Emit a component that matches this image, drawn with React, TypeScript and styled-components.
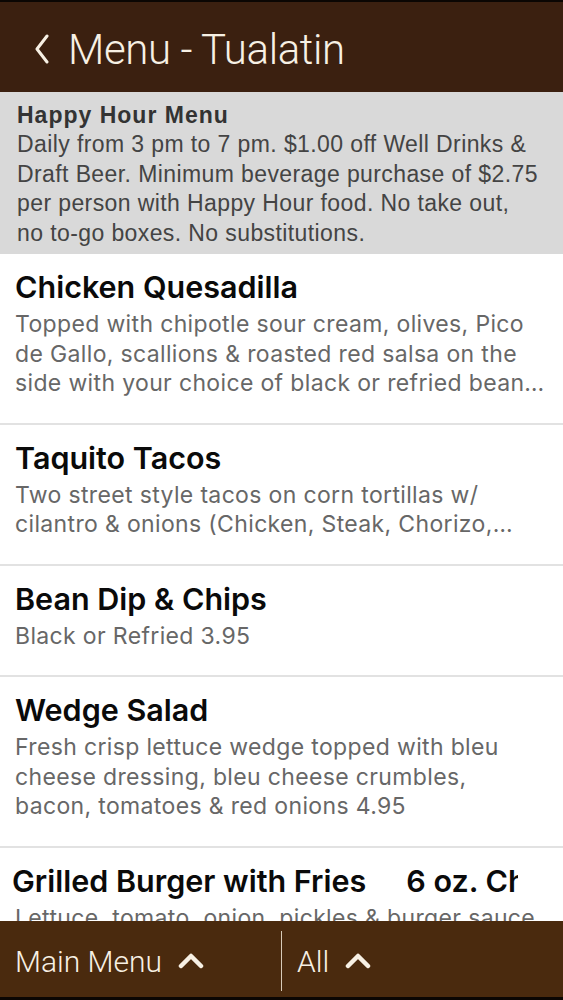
import React from 'react';
import styled, { createGlobalStyle } from 'styled-components';

const GlobalStyle = createGlobalStyle`
  html, body {
    margin: 0;
    padding: 0;
    background: #000;
  }
  #root {
    height: 1000px;
  }
`;

const Screen = styled.div`
  width: 563px;
  height: 1000px;
  display: flex;
  flex-direction: column;
  overflow: hidden;
  background: #fff;
  border-top: 2px solid #0b0603;
  border-bottom: 3px solid #0b0603;
  box-sizing: border-box;
`;

const Header = styled.header`
  flex: 0 0 90px;
  display: flex;
  align-items: center;
  gap: 18px;
  padding: 4px 0 0 34px;
  background: #3b2010;
  color: #f7f0e4;
  box-sizing: border-box;
`;

const BackButton = styled.button`
  display: flex;
  align-items: center;
  padding: 0;
  border: none;
  background: transparent;
  color: inherit;
  cursor: pointer;
`;

const HeaderTitle = styled.h1`
  margin: 0;
  font-family: Roboto, 'Liberation Sans', sans-serif;
  font-weight: 300;
  font-size: 42px;
  letter-spacing: -0.4px;
`;

const Notice = styled.section`
  padding: 9px 22px 6px 17px;
  background: #d9d9d9;
  color: #444;
  font-family: 'Liberation Sans', Arial, sans-serif;
  font-size: 23px;
  line-height: 29.4px;
  letter-spacing: 0.4px;
`;

const NoticeTitle = styled.div`
  font-weight: 700;
  color: #333;
  letter-spacing: 1px;
`;

const List = styled.main`
  flex: 1;
  overflow: hidden;
`;

const Item = styled.article`
  padding: 14px 15px 24px;
  border-bottom: 2px solid #e2e2e2;
  font-family: Inter, 'Noto Sans', sans-serif;
`;

const ItemTitle = styled.h2`
  margin: 0;
  font-size: 30.5px;
  line-height: 38px;
  font-weight: 600;
  color: #0a0a0a;
  white-space: nowrap;
`;

const Marquee = styled.div`
  overflow: hidden;
  margin: 0 30px 0 -3px;
`;

const MarqueeText = styled(ItemTitle)<{ $gap: number }>`
  display: flex;
  gap: ${({ $gap }) => $gap}px;
`;

const ItemDesc = styled.p<{ $lines: number }>`
  margin: 4px 0 0;
  font-size: 23px;
  line-height: 29.5px;
  letter-spacing: 0.35px;
  color: #676767;
  display: -webkit-box;
  -webkit-box-orient: vertical;
  -webkit-line-clamp: ${({ $lines }) => $lines};
  overflow: hidden;
`;

const Footer = styled.footer`
  flex: 0 0 76px;
  display: flex;
  align-items: center;
  background: #4a2a0e;
  color: #f7f0e4;
  font-family: Roboto, 'Liberation Sans', sans-serif;
  font-weight: 300;
  font-size: 30px;
`;

const FooterTab = styled.button<{ $width?: number }>`
  display: flex;
  align-items: center;
  gap: 16px;
  height: 100%;
  padding: 4px 0 0 15px;
  width: ${({ $width }) => ($width ? `${$width}px` : 'auto')};
  border: none;
  background: transparent;
  color: inherit;
  font: inherit;
  cursor: pointer;
  box-sizing: border-box;
`;

const Divider = styled.div`
  width: 1px;
  height: 60px;
  margin-top: 4px;
  background: #d8cbb8;
`;

const BackIcon = () => (
  <svg width="16" height="30" viewBox="0 0 16 30" fill="none">
    <polyline points="13,2 3,15 13,28" stroke="currentColor" strokeWidth="3" strokeLinecap="round" strokeLinejoin="round" />
  </svg>
);

const ChevronUp = () => (
  <svg width="26" height="16" viewBox="0 0 26 16" fill="none">
    <polyline points="3,13 13,3 23,13" stroke="currentColor" strokeWidth="4.5" strokeLinecap="round" strokeLinejoin="round" />
  </svg>
);

interface IMenuItem {
  name: string;
  description: string;
  lines: number;
}

const items: IMenuItem[] = [
  {
    name: 'Chicken Quesadilla',
    description:
      'Topped with chipotle sour cream, olives, Pico de Gallo, scallions & roasted red salsa on the side with your choice of black or refried beans 6.95',
    lines: 3,
  },
  {
    name: 'Taquito Tacos',
    description:
      'Two street style tacos on corn tortillas w/ cilantro & onions (Chicken, Steak, Chorizo, Carnitas) 3.95',
    lines: 2,
  },
  {
    name: 'Bean Dip & Chips',
    description: 'Black or Refried 3.95',
    lines: 1,
  },
  {
    name: 'Wedge Salad',
    description:
      'Fresh crisp lettuce wedge topped with bleu cheese dressing, bleu cheese crumbles, bacon, tomatoes & red onions 4.95',
    lines: 3,
  },
];

const App: React.FC = () => {
  return (
    <>
      <GlobalStyle />
      <Screen>
        <Header>
          <BackButton aria-label="Back">
            <BackIcon />
          </BackButton>
          <HeaderTitle>Menu - Tualatin</HeaderTitle>
        </Header>

        <List>
          <Notice>
            <NoticeTitle>Happy Hour Menu</NoticeTitle>
            Daily from 3 pm to 7 pm. $1.00 off Well Drinks &amp; Draft Beer. Minimum beverage purchase of $2.75 per
            person with Happy Hour food. No take out, no to-go boxes. No substitutions.
          </Notice>

          {items.map((item) => (
            <Item key={item.name}>
              <ItemTitle>{item.name}</ItemTitle>
              <ItemDesc $lines={item.lines}>{item.description}</ItemDesc>
            </Item>
          ))}

          <Item>
            <Marquee>
              <MarqueeText $gap={40}>
                <span>Grilled Burger with Fries</span>
                <span>6 oz. Choice Angus Beef</span>
              </MarqueeText>
            </Marquee>
            <ItemDesc $lines={2}>Lettuce, tomato, onion, pickles &amp; burger sauce on a toasted bun 5.95</ItemDesc>
          </Item>
        </List>

        <Footer>
          <FooterTab $width={281}>
            Main Menu
            <ChevronUp />
          </FooterTab>
          <Divider />
          <FooterTab>
            All
            <ChevronUp />
          </FooterTab>
        </Footer>
      </Screen>
    </>
  );
};

export default App;
